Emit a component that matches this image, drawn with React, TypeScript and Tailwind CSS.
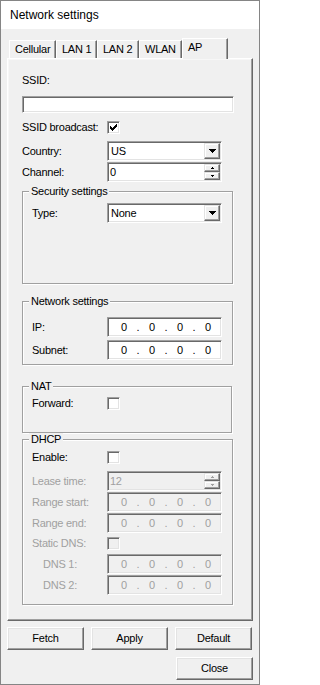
import React from "react";

const sunken =
  "border border-t-[#a0a0a0] border-l-[#a0a0a0] border-b-white border-r-white shadow-[inset_1px_1px_0_#696969,inset_-1px_-1px_0_#e3e3e3]";
const raised =
  "border border-t-[#e3e3e3] border-l-[#e3e3e3] border-b-[#696969] border-r-[#696969] shadow-[inset_-1px_-1px_0_#a0a0a0,inset_1px_1px_0_#ffffff]";
const button =
  "border border-t-white border-l-white border-b-[#696969] border-r-[#696969] shadow-[inset_-1px_-1px_0_#a0a0a0,inset_1px_1px_0_#e3e3e3]";

function DownTri({ color = "#000" }: { color?: string }) {
  return (
    <svg width="7" height="4" viewBox="0 0 7 4" shapeRendering="crispEdges">
      <path d="M0 0h7v1h-1v1h-1v1h-1v1h-1v-1h-1v-1h-1v-1h-1z" fill={color} />
    </svg>
  );
}

function SmallUp({ color }: { color: string }) {
  return (
    <svg width="3" height="2" viewBox="0 0 3 2" shapeRendering="crispEdges">
      <path d="M1 0h1v1h1v1h-3v-1h1z" fill={color} />
    </svg>
  );
}

function SmallDown({ color }: { color: string }) {
  return (
    <svg width="3" height="2" viewBox="0 0 3 2" shapeRendering="crispEdges">
      <path d="M0 0h3v1h-1v1h-1v-1h-1z" fill={color} />
    </svg>
  );
}

function CheckBox({ checked = false, disabled = false }: { checked?: boolean; disabled?: boolean }) {
  return (
    <div
      className={`w-[13px] h-[13px] shrink-0 ${sunken} ${
        disabled ? "bg-[#f0f0f0]" : "bg-white"
      } flex items-center justify-center`}
    >
      {checked && (
        <svg width="7" height="7" viewBox="0 0 7 7" shapeRendering="crispEdges">
          <path
            d="M6 0h1v1h-1zM5 1h2v1h-2zM0 2h1v1h-1zM4 2h3v1h-3zM0 3h2v1h-2zM3 3h3v1h-3zM0 4h5v1h-5zM1 5h3v1h-3zM2 6h1v1h-1z"
            fill="#000"
          />
        </svg>
      )}
    </div>
  );
}

function Combo({ value }: { value: string }) {
  return (
    <div className={`w-[115px] h-[20px] shrink-0 ${sunken} bg-white p-[1px] flex`}>
      <div className="flex-1 pl-[2px] leading-[16px]">{value}</div>
      <div className={`w-[16px] h-full ${raised} bg-[#f0f0f0] flex items-center justify-center`}>
        <DownTri />
      </div>
    </div>
  );
}

function Spin({ value, disabled = false }: { value: string; disabled?: boolean }) {
  const c = disabled ? "#a0a0a0" : "#000";
  return (
    <div
      className={`w-[115px] h-[20px] shrink-0 ${sunken} ${
        disabled ? "bg-[#f0f0f0] text-[#a0a0a0]" : "bg-white text-black"
      } p-[1px] flex`}
    >
      <div className="flex-1 pl-[1px] leading-[16px]">{value}</div>
      <div className="w-[16px] h-full flex flex-col">
        <div className={`flex-1 ${raised} bg-[#f0f0f0] flex items-center justify-center`}>
          <SmallUp color={c} />
        </div>
        <div className={`flex-1 ${raised} bg-[#f0f0f0] flex items-center justify-center`}>
          <SmallDown color={c} />
        </div>
      </div>
    </div>
  );
}

function IpBox({ disabled = false }: { disabled?: boolean }) {
  const field = "w-[22px] text-center";
  const dot = "w-[6px] text-center";
  return (
    <div
      className={`w-[115px] h-[20px] shrink-0 ${sunken} ${
        disabled ? "bg-[#f0f0f0] text-[#a0a0a0]" : "bg-white text-black"
      } p-[1px] pl-[5px] flex items-center leading-[16px]`}
    >
      <span className={field}>0</span>
      <span className={dot}>.</span>
      <span className={field}>0</span>
      <span className={dot}>.</span>
      <span className={field}>0</span>
      <span className={dot}>.</span>
      <span className={field}>0</span>
    </div>
  );
}

function Group({
  title,
  width,
  className = "",
  children,
}: {
  title: string;
  width: string;
  className?: string;
  children: React.ReactNode;
}) {
  return (
    <fieldset
      className={`${width} ${className} border border-[#a0a0a0] shadow-[inset_1px_1px_0_#ffffff,1px_1px_0_#ffffff]`}
    >
      <legend className="ml-[6px] px-[2px] leading-[13px] bg-[#f0f0f0]">{title}</legend>
      {children}
    </fieldset>
  );
}

function Tab({ label, w, selected = false }: { label: string; w: string; selected?: boolean }) {
  return (
    <div
      className={`${w} ${
        selected ? "h-[21px] -mb-px relative z-10" : "h-[18px]"
      } shrink-0 bg-[#f0f0f0] border-t border-l border-r border-t-white border-l-white border-r-[#696969] shadow-[inset_-1px_0_0_#a0a0a0] pl-[5px] pt-[2px] leading-[13px]`}
    >
      {label}
    </div>
  );
}

export default function App() {
  return (
    <div className="w-[260px] h-[685px] border border-[#858585] bg-[#f0f0f0] flex flex-col font-['Liberation_Sans',Arial,sans-serif] text-[11px] leading-[13px] text-black tracking-[-0.25px] overflow-hidden">
      <div className="h-[28px] shrink-0 bg-white pl-[9px] flex items-center text-[12px] tracking-normal">
        Network settings
      </div>

      <div className="px-[6px] flex flex-col">
        <div className="mt-[9px] h-[20px] flex items-end pl-[2px]">
          <Tab label="Cellular" w="w-[47px]" />
          <Tab label="LAN 1" w="w-[41px]" />
          <Tab label="LAN 2" w="w-[42px]" />
          <Tab label="WLAN" w="w-[43px]" />
          <Tab label="AP" w="w-[46px]" selected />
        </div>

        <div className="h-[563px] border border-t-white border-l-white border-b-[#696969] border-r-[#696969] shadow-[inset_-1px_-1px_0_#a0a0a0,inset_1px_1px_0_#f7f7f7] pl-[14px] flex flex-col">
          <div className="mt-[15px] h-[13px]">SSID:</div>
          <div className={`mt-[9px] w-[212px] h-[17px] ${sunken} bg-white`} />

          <div className="mt-[8px] h-[13px] flex items-center">
            <div className="w-[85px]">SSID broadcast:</div>
            <CheckBox checked />
          </div>

          <div className="mt-[7px] h-[20px] flex items-center">
            <div className="w-[85px]">Country:</div>
            <Combo value="US" />
          </div>
          <div className="mt-[1px] h-[20px] flex items-center">
            <div className="w-[85px]">Channel:</div>
            <Spin value="0" />
          </div>

          <Group title="Security settings" width="w-[211px]" className="mt-[3px]">
            <div className="pl-[9px] pt-[5px] pb-[60px]">
              <div className="h-[20px] flex items-center">
                <div className="w-[75px]">Type:</div>
                <Combo value="None" />
              </div>
            </div>
          </Group>

          <Group title="Network settings" width="w-[211px]" className="mt-[11px]">
            <div className="pl-[9px] pt-[9px] pb-[4px]">
              <div className="h-[20px] flex items-center">
                <div className="w-[75px]">IP:</div>
                <IpBox />
              </div>
              <div className="mt-[3px] h-[20px] flex items-center">
                <div className="w-[75px]">Subnet:</div>
                <IpBox />
              </div>
            </div>
          </Group>

          <Group title="NAT" width="w-[210px]" className="mt-[15px]">
            <div className="pl-[9px] pt-[4px] pb-[22px]">
              <div className="h-[13px] flex items-center">
                <div className="w-[75px]">Forward:</div>
                <CheckBox />
              </div>
            </div>
          </Group>

          <Group title="DHCP" width="w-[211px]">
            <div className="pl-[9px] pt-[5px] pb-[9px]">
              <div className="h-[13px] flex items-center">
                <div className="w-[75px]">Enable:</div>
                <CheckBox />
              </div>
              <div className="mt-[7px] h-[20px] flex items-center text-[#a0a0a0]">
                <div className="w-[75px]">Lease time:</div>
                <Spin value="12" disabled />
              </div>
              <div className="mt-[1px] h-[20px] flex items-center text-[#a0a0a0]">
                <div className="w-[75px]">Range start:</div>
                <IpBox disabled />
              </div>
              <div className="mt-[1px] h-[20px] flex items-center text-[#a0a0a0]">
                <div className="w-[75px]">Range end:</div>
                <IpBox disabled />
              </div>
              <div className="mt-[4px] h-[13px] flex items-center text-[#a0a0a0]">
                <div className="w-[75px]">Static DNS:</div>
                <CheckBox disabled />
              </div>
              <div className="mt-[4px] h-[20px] flex items-center text-[#a0a0a0]">
                <div className="w-[75px] pl-[11px]">DNS 1:</div>
                <IpBox disabled />
              </div>
              <div className="mt-[1px] h-[20px] flex items-center text-[#a0a0a0]">
                <div className="w-[75px] pl-[11px]">DNS 2:</div>
                <IpBox disabled />
              </div>
            </div>
          </Group>
        </div>

        <div className="mt-[6px] flex gap-[7px]">
          <div className={`w-[77px] h-[23px] ${button} flex items-center justify-center`}>Fetch</div>
          <div className={`w-[77px] h-[23px] ${button} flex items-center justify-center`}>Apply</div>
          <div className={`w-[77px] h-[23px] ${button} flex items-center justify-center`}>Default</div>
        </div>
        <div className="mt-[7px] flex justify-end">
          <div className={`w-[77px] h-[23px] ${button} flex items-center justify-center`}>Close</div>
        </div>
      </div>
    </div>
  );
}
